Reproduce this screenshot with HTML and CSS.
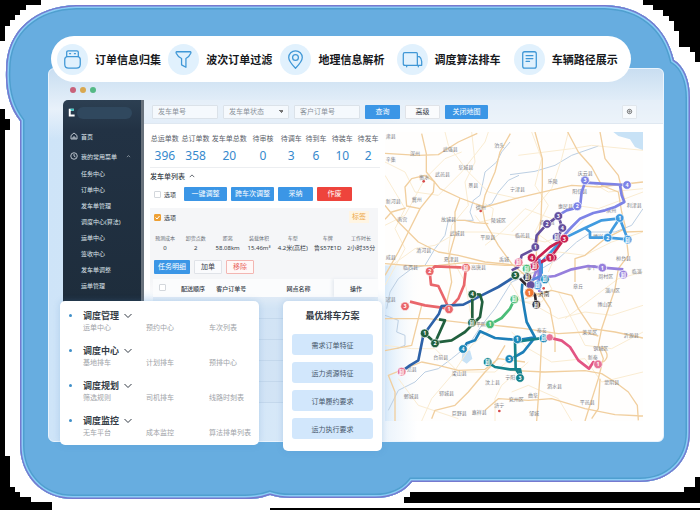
FILE: index.html
```html
<!DOCTYPE html>
<html lang="zh-CN">
<head>
  <meta charset="UTF-8" />
  <meta name="viewport" content="width=device-width, initial-scale=1.0"/>
  <title>智能调度</title>
  <link rel="stylesheet" href="styles.css">
</head>
<body>
  <div class="stage">
    <svg class="backdrop" viewBox="0 0 700 510" preserveAspectRatio="none" aria-hidden="true">
      <defs>
        <path id="blob" d="M76 5H605C641 6 666 26 674 60C684 66 690 80 690 98V432C690 462 669 482 640 482H412C404 492 392 498 375 498H290Q279 498 270 495C262 498 255 499 245 499H73C41 499 20 475 20 445V121C10 108 5 92 6 70C6 30 36 6 76 5Z"/>
        <clipPath id="blobClip"><use href="#blob"/></clipPath>
      </defs>
      <g shape-rendering="crispEdges">
        <path d="M0 0H41V5H26V10H20V15H15V20H10V26H5V41H0Z"/>
        <path d="M0 109H5V119H10V130H5V456H10V487H15V492H20V497H31V502H52V510H0Z"/>
        <path d="M700 0H643V5H653V10H663V16H669V21H674V31H679V47H690V52H695V62H700Z"/>
        <path d="M700 477H695V487H684V492H410V497H404V503H700ZM270 508H700V510H270Z"/>
      </g>
      <use href="#blob" fill="#67ade0"/>
      <g clip-path="url(#blobClip)" fill="none">
        <use href="#blob" stroke="#4f9fcf" stroke-width="9"/>
        <use href="#blob" stroke="#8accf5" stroke-width="6"/>
        <use href="#blob" stroke="#7679cf" stroke-width="3"/>
      </g>
    </svg>

    <ul class="features">
      <li>
        <span class="feature-icon"><svg viewBox="0 0 32 32"><path d="M10 13V8.500Q10 7 11.500 7H20.500Q22 7 22 8.500V13M11 13H21Q24 13 24 16V21Q24 25 20 25H12Q8 25 8 21V16Q8 13 11 13Z"/><path d="M13 10H14M18 10H19"/></svg></span>
        <span>订单信息归集</span>
      </li>
      <li>
        <span class="feature-icon"><svg viewBox="0 0 32 32"><path d="M9 8H23Q24 8 23.500 9.500Q22 13 18.500 15V24L14 21.500V15Q10 13 8.500 9.500Q8 8 9 8Z"/></svg></span>
        <span>波次订单过滤</span>
      </li>
      <li>
        <span class="feature-icon"><svg viewBox="0 0 32 32"><path d="M16 25C11 20 9 17 9 14A7 7 0 0 1 23 14C23 17 21 20 16 25Z"/><circle cx="16" cy="14" r="3"/></svg></span>
        <span>地理信息解析</span>
      </li>
      <li>
        <span class="feature-icon"><svg viewBox="0 0 32 32"><path d="M8 9H20Q21 9 21 10V22H8Q6.500 22 6.500 20.500V10.500Q6.500 9 8 9ZM21 13H23Q25.500 15 25.500 18V22H21M10 22V23.500M22 22V23.500"/></svg></span>
        <span>调度算法排车</span>
      </li>
      <li>
        <span class="feature-icon"><svg viewBox="0 0 32 32"><rect x="9" y="8" width="14" height="17" rx="2"/><path d="M12.500 12H19.500M12.500 15H19.500M12.500 18H16"/></svg></span>
        <span>车辆路径展示</span>
      </li>
    </ul>

    <div class="window">
      <div class="window-dots"><i class="red"></i><i class="yellow"></i><i class="green"></i></div>
      <div class="app">
        <nav class="sidebar">
          <div class="brand">
            <svg viewBox="0 0 18 24"><path d="M2 2H15V7H7V17H17V22H2Z" fill="#fff"/><path d="M5 2H15V7H9Z" fill="#35c3c0"/></svg>
            <span class="brand-name"></span>
          </div>
          <a class="top-link" href="#"><svg viewBox="0 0 16 16"><path d="M2 7L8 2L14 7V14H2ZM6 14V10H10V14"/></svg>首页</a>
          <a class="top-link" href="#"><svg viewBox="0 0 16 16"><circle cx="8" cy="8" r="6.500"/><path d="M8 4V8L11 10"/></svg>我的常用菜单<svg class="fold" viewBox="0 0 16 16"><path d="M3 10L8 5L13 10"/></svg></a>
          <div class="sub-links">
            <a href="#">任务中心</a>
            <a href="#">订单中心</a>
            <a href="#">发车单管理</a>
            <a href="#">调度中心(算法)</a>
            <a href="#">运单中心</a>
            <a href="#">签收中心</a>
            <a href="#">发车单调整</a>
            <a href="#">运单管理</a>
          </div>
        </nav>

        <main class="main">
          <form class="toolbar">
            <input type="text" placeholder="发车单号" aria-label="发车单号">
            <select aria-label="发车单状态"><option>发车单状态</option></select>
            <input type="text" placeholder="客户订单号" aria-label="客户订单号">
            <button type="button" class="btn primary">查询</button>
            <button type="button" class="btn plain">高级</button>
            <button type="button" class="btn primary wide">关闭地图</button>
            <button type="button" class="btn gear" aria-label="设置"><svg viewBox="0 0 16 16"><circle cx="8" cy="8" r="5"/><circle cx="8" cy="8" r="1.500"/></svg></button>
          </form>

          <div class="content">
            <section class="orders">
              <dl class="stats">
                <div><dt>总运单数</dt><dd>396</dd></div>
                <div><dt>总订单数</dt><dd>358</dd></div>
                <div><dt>发车单总数</dt><dd>20</dd></div>
                <div><dt>待审核</dt><dd>0</dd></div>
                <div><dt>待调车</dt><dd>3</dd></div>
                <div><dt>待到车</dt><dd>6</dd></div>
                <div><dt>待装车</dt><dd>10</dd></div>
                <div><dt>待发车</dt><dd>2</dd></div>
              </dl>

              <h2>发车单列表 <svg viewBox="0 0 16 16"><path d="M2 11L8 5L14 11"/></svg></h2>

              <div class="actions">
                <label><input type="checkbox">选项</label>
                <button type="button" class="btn primary wide">一键调整</button>
                <button type="button" class="btn primary wide">跨车次调整</button>
                <button type="button" class="btn primary">采纳</button>
                <button type="button" class="btn danger">作废</button>
              </div>

              <div class="order">
                <div class="order-head">
                  <label><input type="checkbox" checked>选项</label>
                  <span class="tag">标签</span>
                </div>
                <dl class="metrics">
                  <div><dt>预测成本</dt><dd>0</dd></div>
                  <div><dt>卸货点数</dt><dd>2</dd></div>
                  <div><dt>距离</dt><dd>58.08km</dd></div>
                  <div><dt>装载体积</dt><dd>15.46m³</dd></div>
                  <div><dt>车型</dt><dd>4.2米(高栏)</dd></div>
                  <div><dt>车牌</dt><dd>鲁S57E1D</dd></div>
                  <div><dt>工作时长</dt><dd>2小时35分</dd></div>
                </dl>
                <div class="order-buttons">
                  <button type="button" class="btn primary">任务明细</button>
                  <button type="button" class="btn plain">加单</button>
                  <button type="button" class="btn remove">移除</button>
                </div>
                <table class="tasks">
                  <thead>
                    <tr><th class="pick"><input type="checkbox" aria-label="全选"></th><th>配送顺序</th><th>客户订单号</th><th class="site">网点名称</th><th class="fixed">操作</th></tr>
                  </thead>
                  <tbody>
                    <tr><td></td><td></td><td></td><td></td><td></td></tr>
                    <tr><td></td><td></td><td></td><td></td><td></td></tr>
                    <tr><td></td><td></td><td></td><td></td><td></td></tr>
                    <tr><td></td><td></td><td></td><td></td><td></td></tr>
                    <tr><td></td><td></td><td></td><td></td><td></td></tr>
                  </tbody>
                </table>
              </div>
            </section>

            <svg class="map" viewBox="0 0 774 867" role="img" aria-label="车辆路径地图">
              <defs>
                <linearGradient id="mist" x1="0" x2="1"><stop offset="0" stop-color="#d8eafa"/><stop offset="1" stop-color="#fff" stop-opacity="0"/></linearGradient>
              </defs>
              <rect width="774" height="867" fill="#fffefd"/>
              <rect y="400" width="110" height="467" fill="url(#mist)"/>
              <path class="water" d="M685 0H774V55L750 45L735 22L700 12ZM232 662L255 655L262 680L245 695L230 685Z"/>

              <g class="river">
                <path d="M375 30L350 60L335 90L300 120L292 160L285 190L265 205L255 240L265 265L215 265L190 265L180 310L150 350L120 400L80 410L40 440L15 480L5 530"/>
                <path d="M402 130L370 145L340 180L320 215L290 228"/>
                <path d="M375 128L450 118L510 100L560 70L640 42"/>
                <path d="M774 230L740 280L690 300L620 300L575 330L520 380L470 410L380 450L330 530L290 580L250 640L200 680L160 710L120 720L90 750L40 775L10 835"/>
                <path d="M0 550L40 565L35 600L60 610L60 640L35 650"/>
              </g>

              <g class="minor">
                <path d="M0 90L60 120L90 180L160 190L230 120L300 30L310 0M180 0L190 40L250 120L310 180L400 200M0 280L60 250L120 140L180 80L230 60"/>
                <path d="M20 400L90 350L150 340L220 300L300 300L390 310L480 330L560 300L600 260M300 340L350 300L420 230L500 260L570 220L640 230L774 180"/>
                <path d="M0 130L60 230L30 290L60 350L0 460M260 0L270 90L240 150L250 220L200 280L190 360L240 450L260 560"/>
                <path d="M400 70L480 60L560 50L620 40L774 55M380 300L440 240L500 170L530 80L550 0M440 380L520 360L600 370L680 330L774 300"/>
                <path d="M390 500L450 520L520 560L600 540L680 550L774 520M520 480L560 560L600 640L680 650L774 600M380 600L430 650L500 690L600 680L650 750L774 720"/>
                <path d="M0 640L80 650L150 650L220 720L330 720L400 660M110 867L140 800L200 730L260 640L330 580M40 740L100 820L220 860M380 780L430 760L520 800L560 867M330 867V800L350 760L430 690"/>
                <path d="M440 0L470 80L450 160L490 220L450 300L520 350L490 420M600 140L670 180L774 170M540 560L620 500L700 440L774 420"/>
                <path d="M275 235L300 215L325 230L320 262L285 270L270 250M370 440L420 420L480 430L500 470L470 510L410 510Z"/>
              </g>

              <g class="road">
                <path d="M0 64L100 70L160 68L220 30L277 4M110 5L124 65V120L165 170L225 198L270 215L300 225L390 200L440 188L560 160L640 165L774 150"/>
                <path d="M148 148L145 180L105 230L70 300L40 360L0 430M150 150L120 130L80 140L60 165L65 222L105 230"/>
                <path d="M0 220L40 270L100 330L160 360L220 370L300 390L400 400M376 5L345 60L330 120L300 190L292 228L300 270L340 340L380 395L420 430"/>
                <path d="M225 198L210 240V310L190 380L200 450L185 510M0 395L90 402L160 400L240 392L360 400L440 400"/>
                <path d="M62 228L20 240L0 262M215 265L240 265L270 272L310 275"/>
                <path d="M450 0L472 80V160L468 260L455 350L450 420L440 480L470 490L495 530L510 610V660"/>
                <path d="M548 0L580 60L620 105L650 160L700 180L710 240L720 280L730 370L700 410L690 470L670 530L650 590L640 640L655 680L640 740L600 867M645 0L660 80L700 130L720 210"/>
                <path d="M720 300L774 298M570 450V380L600 370L660 320L720 290M420 500L500 475L560 490L580 530L620 590L690 600L774 618"/>
                <path d="M0 656L80 640L110 520M0 560L130 560L260 575L330 580L420 590L520 605L600 600L640 612"/>
                <path d="M30 867V780L10 730L60 710L110 690L160 700L220 715L300 712L340 680L420 690M140 860L150 835L210 820L250 780L300 720L330 690L360 640"/>
                <path d="M470 620L465 730L455 867M375 715L480 720L600 716L650 725L690 750L730 780L757 820L760 865M300 835L340 800L430 805L500 800L600 830L690 848L774 852"/>
                <path d="M655 690Q680 670 650 645M620 860L640 830L645 740"/>
              </g>

              <g class="labels">
                <text x="2" y="18">肃县</text><text x="75" y="70">深州</text><text x="173" y="58">武强县</text><text x="328" y="46">泊头</text>
                <text x="2" y="88">辛集</text><text x="220" y="112">阜城县</text><text x="150" y="131">武邑县</text><text x="103" y="140">衡水</text>
                <text x="250" y="164">景县</text><text x="375" y="176">宁津县</text><text x="2" y="214">新河县</text><text x="80" y="206">冀州</text>
                <text x="272" y="230">德州</text><text x="37" y="266">南宫</text><text x="168" y="267">故城县</text><text x="318" y="271">陵城区</text>
                <text x="194" y="308">武城县</text><text x="286" y="321">平原县</text><text x="94" y="360">清河县</text><text x="2" y="382">威县</text>
                <text x="176" y="387">夏津县</text><text x="54" y="410">临西县</text><text x="342" y="387">禹城</text><text x="258" y="412">高唐县</text>
                <text x="488" y="152">乐陵</text><text x="578" y="129">庆云县</text><text x="562" y="182">阳信县</text><text x="519" y="228">惠民县</text>
                <text x="725" y="224">利津县</text><text x="664" y="241">滨州</text><text x="464" y="275">商河县</text><text x="390" y="315">临邑县</text>
                <text x="624" y="318">博兴</text><text x="693" y="384">桓台县</text><text x="604" y="412">邹平</text><text x="640" y="438">周村区</text>
                <text x="740" y="422">临淄</text><text x="564" y="468">章丘</text><text x="660" y="479">淄川区</text><text x="637" y="523">博山区</text>
                <text x="2" y="507">冠县</text><text x="592" y="607">莱芜区</text><text x="716" y="614">沂源县</text><text x="625" y="653">钢城区</text>
                <text x="455" y="600">泰安</text><text x="145" y="681">台前县</text><text x="200" y="729">梁山县</text><text x="300" y="756">汶上县</text>
                <text x="65" y="718">范县</text><text x="56" y="799">鄄城县</text><text x="162" y="788">郓城县</text><text x="200" y="850">巨野县</text>
                <text x="260" y="846">嘉祥县</text><text x="328" y="826">济宁</text><text x="371" y="808">兖州区</text><text x="429" y="795">曲阜</text>
                <text x="486" y="769">泗水县</text><text x="432" y="848">邹城</text><text x="584" y="816">平邑县</text><text x="658" y="756">蒙阴县</text>
                <text x="608" y="682">新泰</text><text x="272" y="582">平阴</text><text x="361" y="741">宁阳</text>
                <text class="city" x="459" y="492">济南</text>
              </g>
              <g fill="#d64a4a"><circle cx="116" cy="148" r="4"/><circle cx="287" cy="237" r="4"/><circle cx="343" cy="837" r="4"/><circle cx="476" cy="469" r="4"/></g>

              <g class="route">
                <path stroke="#e9666b" d="M75 509L120 520L192 530L160 462L138 458L134 418L150 403L243 407L237 460L220 500L192 530"/>
                <path stroke="#2e62a8" d="M50 718L75 700L100 685L115 610L162 545L170 522L235 518L290 490L340 465L392 432"/>
                <path stroke="#22603e" d="M150 632L180 565L162 562M119 604L150 632L200 625L240 600L285 555L292 510L285 488L262 486V572"/>
                <path stroke="#4bbd78" d="M315 577L350 558L375 530L388 503"/>
                <path stroke="#1e7fb8" d="M234 652L245 634L270 625L285 598L330 618L397 624L450 616L425 570L418 530L410 480L412 455M450 616L415 660L380 680L373 682"/>
                <path stroke="#15828c" d="M307 690L330 705L375 712H405L410 738L392 710L390 630L460 620L475 618"/>
                <path stroke="#e25483" d="M493 617L530 626L555 645L580 685L612 710L625 690L638 696"/>
                <path stroke="#7d83e6" d="M726 159L650 155L600 152L590 180L585 225L545 235L520 250M705 160L710 190L718 210L690 225L660 235L625 243L585 260L560 285L535 312"/>
                <path stroke="#419bdf" d="M470 425V390L535 320L600 288L650 265L704 259L728 322L668 317L680 295L704 259M668 317H615V300L600 288"/>
                <path stroke="#65509e" d="M405 390L410 370L450 350L455 310L485 277L520 252L532 288L520 315M380 415L400 405L405 380"/>
                <path stroke="#c92151" d="M438 400L460 376L495 345L538 320L505 365L480 385L450 400L440 377M438 400L500 377"/>
                <path stroke="#967fdc" d="M445 440L510 432L560 412L610 402L652 407L715 412M445 440L460 400L463 480"/>
                <path stroke="#2f2830" d="M405 440L435 470L450 490L454 517"/>
                <path stroke="#5e86e0" d="M463 380L468 440L445 460M430 450L470 430"/>
              </g>

              <g class="pins">
                <g fill="#e9666b"><circle cx="134" cy="418" r="13"/><circle cx="243" cy="407" r="13"/><circle cx="60" cy="523" r="13"/><circle cx="192" cy="532" r="13"/></g>
                <g fill="#22603e"><circle cx="119" cy="604" r="13"/><circle cx="150" cy="634" r="13"/><circle cx="262" cy="487" r="13"/><circle cx="261" cy="572" r="13"/><circle cx="391" cy="430" r="13"/></g>
                <g fill="#4bbd78"><circle cx="315" cy="577" r="13"/><circle cx="388" cy="502" r="13"/><circle cx="425" cy="410" r="13"/></g>
                <g fill="#1e88b8"><circle cx="234" cy="651" r="13"/><circle cx="373" cy="681" r="13"/><circle cx="397" cy="622" r="13"/><circle cx="476" cy="619" r="13"/><circle cx="480" cy="442" r="13"/></g>
                <g fill="#15828c"><circle cx="308" cy="690" r="13"/><circle cx="405" cy="738" r="13"/></g>
                <g fill="#e77497"><circle cx="50" cy="719" r="13"/><circle cx="494" cy="616" r="11"/><circle cx="401" cy="391" r="13"/><circle cx="639" cy="697" r="13"/></g>
                <g fill="#7d83e6"><circle cx="600" cy="145" r="13"/><circle cx="726" cy="159" r="13"/><circle cx="577" cy="223" r="13"/></g>
                <g fill="#419bdf"><circle cx="704" cy="258" r="13"/><circle cx="668" cy="317" r="13"/><circle cx="728" cy="323" r="13"/><circle cx="458" cy="460" r="13"/></g>
                <g fill="#65509e"><circle cx="520" cy="252" r="13"/><circle cx="486" cy="276" r="13"/><circle cx="532" cy="288" r="13"/><circle cx="451" cy="345" r="13"/><circle cx="515" cy="315" r="13"/><circle cx="437" cy="459" r="13"/></g>
                <g fill="#c92151"><circle cx="538" cy="320" r="13"/><circle cx="440" cy="377" r="13"/><circle cx="505" cy="377" r="11"/><circle cx="495" cy="377" r="13"/><circle cx="449" cy="403" r="13"/></g>
                <g fill="#967fdc"><circle cx="652" cy="407" r="13"/><circle cx="715" cy="428" r="13"/></g>
                <g fill="#302c32"><circle cx="454" cy="518" r="13"/><circle cx="427" cy="436" r="13"/></g>
                <circle cx="433" cy="482" r="14" fill="#ee7735"/>
              </g>
              <g class="pin-text">
                <text x="134" y="424">2</text><text x="60" y="529">3</text><text x="192" y="538">1</text><text x="119" y="610">1</text><text x="150" y="640">2</text>
                <text x="262" y="493">4</text><text x="391" y="436">3</text><text x="315" y="583">1</text><text x="234" y="657">4</text><text x="373" y="687">3</text>
                <text x="397" y="628">1</text><text x="405" y="744">3</text><text x="639" y="703">1</text><text x="600" y="151">3</text><text x="726" y="165">4</text>
                <text x="577" y="229">2</text><text x="704" y="264">1</text><text x="668" y="323">2</text><text x="520" y="258">3</text><text x="486" y="282">2</text>
                <text x="532" y="294">4</text><text x="451" y="351">1</text><text x="538" y="326">3</text><text x="440" y="383">4</text><text x="495" y="383">1</text>
                <text x="652" y="413">1</text><text x="433" y="488">1</text>
                <text x="243" y="413">卸</text><text x="261" y="578">卸</text><text x="388" y="508">卸</text><text x="425" y="416">卸</text><text x="476" y="625">卸</text>
                <text x="308" y="696">卸</text><text x="50" y="725">卸</text><text x="401" y="397">卸</text><text x="728" y="329">卸</text><text x="458" y="466">卸</text>
                <text x="515" y="321">卸</text><text x="449" y="409">卸</text><text x="715" y="434">卸</text><text x="454" y="524">卸</text><text x="427" y="442">卸</text><text x="480" y="448">卸</text>
              </g>
            </svg>
          </div>
        </main>
      </div>
    </div>

    <div class="panels">
      <section class="menu-panel">
        <div class="menu-group">
          <button type="button">调度管理 <svg viewBox="0 0 16 16"><path d="M1 4L8 11L15 4"/></svg></button>
          <div class="menu-items"><a href="#">运单中心</a><a href="#">预约中心</a><a href="#">车次列表</a></div>
        </div>
        <div class="menu-group">
          <button type="button">调度中心 <svg viewBox="0 0 16 16"><path d="M1 4L8 11L15 4"/></svg></button>
          <div class="menu-items"><a href="#">基地排车</a><a href="#">计划排车</a><a href="#">预排中心</a></div>
        </div>
        <div class="menu-group">
          <button type="button">调度规划 <svg viewBox="0 0 16 16"><path d="M1 4L8 11L15 4"/></svg></button>
          <div class="menu-items"><a href="#">筛选规则</a><a href="#">司机排车</a><a href="#">线路时刻表</a></div>
        </div>
        <div class="menu-group">
          <button type="button">调度监控 <svg viewBox="0 0 16 16"><path d="M1 4L8 11L15 4"/></svg></button>
          <div class="menu-items"><a href="#">无车平台</a><a href="#">成本监控</a><a href="#">算法排单列表</a></div>
        </div>
      </section>

      <section class="plan-panel">
        <h3>最优排车方案</h3>
        <button type="button">需求订单特征</button>
        <button type="button">运力资源特征</button>
        <button type="button">订单履约要求</button>
        <button type="button">运力执行要求</button>
      </section>
    </div>
  </div>
</body>
</html>
```

FILE: styles.css
```css
* {
  box-sizing: border-box;
}

body {
  margin: 0;
  background: #fff;
  font-family: "Noto Sans", "Noto Sans CJK SC", sans-serif;
  color: #333b45;
}

ul, dl, dd, h2, h3 {
  margin: 0;
  padding: 0;
}

a {
  color: inherit;
  text-decoration: none;
}

button, input, select {
  font-family: inherit;
  margin: 0;
}

svg {
  fill: none;
  stroke: currentColor;
}

.stage {
  position: relative;
  min-height: 100vh;
  padding: 36px 36px 68px 48px;
}

.backdrop {
  position: absolute;
  top: 0;
  left: 0;
  width: 100%;
  height: 100%;
  fill: #000;
  stroke: none;
}

/* feature pill */
.features {
  position: relative;
  z-index: 2;
  display: grid;
  grid-template-columns: 111fr 112fr 116fr 117fr 106fr;
  align-items: center;
  height: 46px;
  margin: 0 33px -14px 3px;
  padding: 0 11px 0 6px;
  background: #fff;
  border-radius: 23px;
  list-style: none;
  font-size: 11px;
  font-weight: bold;
  color: #16181c;
}

.features li {
  display: flex;
  align-items: center;
  gap: 7px;
  white-space: nowrap;
}

.feature-icon {
  display: flex;
  width: 31px;
  height: 31px;
  background: #e1f1fd;
  border-radius: 50%;
  color: #3f97d6;
}

.feature-icon svg {
  width: 100%;
  stroke-width: 1.3;
  stroke-linejoin: round;
  stroke-linecap: round;
}

/* app window */
.window {
  position: relative;
  padding: 18px 0 0 14px;
  border: 1px solid #eaf4fd;
  border-radius: 6px;
  background:
    linear-gradient(to bottom, #c9def1, #e8f1fa 40px, rgba(255,255,255,0) 70px),
    linear-gradient(to right, #cee4f8, #d9e9f8 50%, #fff 60%);
  overflow: hidden;
}

.window-dots {
  display: flex;
  gap: 4px;
  height: 13px;
  padding-left: 7px;
}

.window-dots i {
  width: 6px;
  height: 6px;
  border-radius: 50%;
}

.red { background: #c9627a; }
.yellow { background: #d9a850; }
.green { background: #55b985; }

.app {
  display: flex;
  align-items: flex-start;
}

.sidebar {
  flex: 0 0 81px;
  height: 202px;
  background: linear-gradient(#2c3f52, #223244 30px, #1e2d3c);
  border-right: 3px solid #68727c;
  border-radius: 5px 0 0 0;
  color: #dfe6ec;
  font-size: 6px;
}

.brand {
  display: flex;
  align-items: center;
  gap: 2px;
  height: 26px;
  padding-left: 5px;
}

.brand svg {
  width: 7px;
  stroke: none;
}

.brand-name {
  width: 55px;
  height: 12px;
  border-radius: 6px;
  background: #30485e;
}

.top-link {
  display: flex;
  align-items: center;
  gap: 3px;
  height: 20px;
  padding-left: 7px;
}

.top-link svg {
  width: 8px;
  stroke-width: 1.6;
}

.top-link .fold {
  width: 5px;
  margin-left: 6px;
}

.sub-links a {
  display: block;
  padding-left: 18px;
  line-height: 16px;
}

.main {
  flex: 1;
  min-width: 0;
}

.toolbar {
  display: flex;
  align-items: center;
  gap: 5px;
  height: 24px;
  padding: 0 26px 0 8px;
  background: rgba(232,240,248,0.6);
  border-bottom: 1px solid #dfe8f1;
}

.toolbar input,
.toolbar select {
  width: 66px;
  height: 14px;
  padding: 0 5px;
  border: 1px solid #dbe2e9;
  border-radius: 1px;
  background: #f5f9fd;
  font-size: 7px;
  line-height: 12px;
  color: #8b929b;
}

.toolbar input::placeholder {
  color: #8b929b;
}

.toolbar select {
  appearance: none;
  background: conic-gradient(from 315deg at 50% 100%, #777 90deg, transparent 0) right 5px center / 4px 3px no-repeat #f5f9fd;
}

.btn {
  min-width: 35px;
  height: 14px;
  padding: 0 3px;
  border: 1px solid transparent;
  border-radius: 1px;
  font-size: 7px;
  line-height: 12px;
  white-space: nowrap;
  cursor: pointer;
}

.btn.wide {
  min-width: 43px;
}

.primary { background: #3b96e6; color: #fff; }
.danger { background: #ee443c; color: #fff; }

.plain {
  background: #fafbfd;
  border-color: #e0e3e8;
  color: #3c434c;
}

.remove {
  min-width: 28px;
  background: #fff8f7;
  border-color: #f3b6b2;
  color: #e9665f;
}

.gear {
  display: flex;
  align-items: center;
  justify-content: center;
  min-width: 14px;
  margin-left: auto;
  background: #f7fafd;
  border-color: #e0e6ec;
  color: #444;
}

.gear svg {
  flex: 0 0 7px;
  stroke-width: 1.6;
}

.content {
  display: flex;
  align-items: flex-start;
  background: linear-gradient(#fff 165px, rgba(255,255,255,0) 185px);
  padding: 7px 20px 0 6px;
}

.orders {
  flex: 0 0 230px;
}

.stats,
.metrics {
  display: grid;
  text-align: center;
  white-space: nowrap;
}

.stats {
  grid-template-columns: 30fr 32fr 36fr 32fr 25fr 25fr 28fr 24fr;
  height: 37px;
  border-bottom: 1px solid #eceef1;
}

.stats dt {
  font-size: 7px;
  line-height: 16px;
  color: #5b616a;
}

.stats dd {
  font-size: 12px;
  line-height: 17px;
  color: #3689cd;
}

.orders h2 {
  font-size: 7px;
  font-weight: 500;
  line-height: 18px;
}

.orders h2 svg {
  width: 6px;
  margin-left: 2px;
  stroke-width: 2;
}

.orders label {
  display: flex;
  align-items: center;
  gap: 3px;
  font-size: 6px;
}

input[type="checkbox"] {
  appearance: none;
  width: 7px;
  height: 7px;
  border: 1px solid #d3d7dc;
  border-radius: 1px;
  background: #fff;
}

input[type="checkbox"]:checked {
  border-color: #eea034;
  background: #eea034 url("data:image/svg+xml,%3Csvg xmlns='http://www.w3.org/2000/svg' viewBox='0 0 10 10'%3E%3Cpath d='M1 5L4 8L9 2' fill='none' stroke='white' stroke-width='2'/%3E%3C/svg%3E") center / 5px no-repeat;
}

.actions {
  display: flex;
  gap: 4px;
  height: 22px;
  padding-left: 4px;
  padding-top: 1px;
}

.actions label {
  height: 14px;
  margin-right: 4px;
}

.order {
  margin-right: 2px;
  background: linear-gradient(#f5f6f8 74px, rgba(245,246,248,0) 95px);
}

.order-head {
  display: flex;
  align-items: center;
  justify-content: space-between;
  height: 18px;
  padding: 0 9px 0 4px;
}

.tag {
  padding: 0 3px;
  background: #fff5e3;
  color: #eda94d;
  font-size: 7px;
  line-height: 12px;
}

.metrics {
  grid-template-columns: 30fr 32fr 32fr 31fr 37fr 33fr 34fr;
  padding-top: 7px;
}

.metrics dt {
  font-size: 5px;
  line-height: 10px;
  color: #686e76;
}

.metrics dd {
  font-size: 6px;
  line-height: 10px;
}

.order-buttons {
  display: flex;
  gap: 4px;
  height: 21px;
  padding: 7px 0 0 4px;
}

.order-buttons .btn {
  flex: none;
}

.order-buttons .plain {
  min-width: 28px;
}

.tasks {
  width: 225px;
  margin: 5px 0 0 3px;
  border-collapse: collapse;
  font-size: 6px;
  text-align: left;
}

.tasks th {
  height: 18px;
  padding: 0;
  background: #fbfcfd;
  font-weight: 500;
}

.tasks .pick {
  width: 28px;
  padding-left: 6px;
}

.tasks .site {
  padding-left: 26px;
}

.tasks .fixed {
  width: 44px;
  text-align: center;
  box-shadow: -2px 0 3px #e5eaf0;
}

.tasks td {
  height: 21px;
  padding: 0;
  border-bottom: 1px solid #c4d8ec;
  background: rgba(205,223,242,0.5);
}

.map {
  display: block;
  flex: 1;
  min-width: 0;
  margin: 1px 0 20px 5px;
  stroke: none;
}

.water { fill: #c8e2f6; }
.river { stroke: #bccfe3; stroke-width: 3; fill: none; }
.minor { stroke: #faecd2; stroke-width: 3; fill: none; }
.road { stroke: #f1cf9f; stroke-width: 4; fill: none; stroke-linejoin: round; }
.route { stroke-width: 8; fill: none; stroke-linejoin: round; }
.labels { fill: #7d7f87; font-size: 15px; }
.labels .city { fill: #333; font-size: 17px; }
.pins { stroke: #fff; stroke-width: 2; }
.pin-text { fill: #fff; font-size: 16px; font-weight: bold; text-anchor: middle; }

/* panels over the window */
.panels {
  position: absolute;
  z-index: 3;
  top: 301px;
  left: 60px;
  display: flex;
  align-items: flex-start;
  gap: 24px;
}

.menu-panel,
.plan-panel {
  background: #fff;
  border-radius: 5px;
  box-shadow: 0 0 6px rgba(80,140,200,0.25);
}

.menu-panel {
  display: grid;
  gap: 11px;
  width: 199px;
  padding: 8px 0 7px 23px;
}

.menu-group {
  position: relative;
}

.menu-group::before {
  content: "";
  position: absolute;
  top: 5px;
  left: -14px;
  width: 3px;
  height: 3px;
  border-radius: 50%;
  background: #3f8fc8;
}

.menu-group button {
  display: flex;
  align-items: center;
  gap: 5px;
  padding: 0;
  border: 0;
  background: none;
  color: #333b45;
  font-size: 9px;
  font-weight: bold;
  line-height: 14px;
}

.menu-group button svg {
  width: 8px;
  stroke-width: 2;
}

.menu-items {
  display: grid;
  grid-template-columns: 63px 63px auto;
  font-size: 7px;
  line-height: 10px;
  color: #a0a3a8;
  white-space: nowrap;
}

.plan-panel {
  display: grid;
  gap: 7px;
  width: 99px;
  padding: 8px 9px 12px;
}

.plan-panel h3 {
  margin-bottom: 4px;
  font-size: 9px;
  line-height: 14px;
  text-align: center;
}

.plan-panel button {
  height: 21px;
  padding: 0;
  border: 0;
  border-radius: 3px;
  background: #d2e7fc;
  color: #46566a;
  font-size: 7px;
}
```
